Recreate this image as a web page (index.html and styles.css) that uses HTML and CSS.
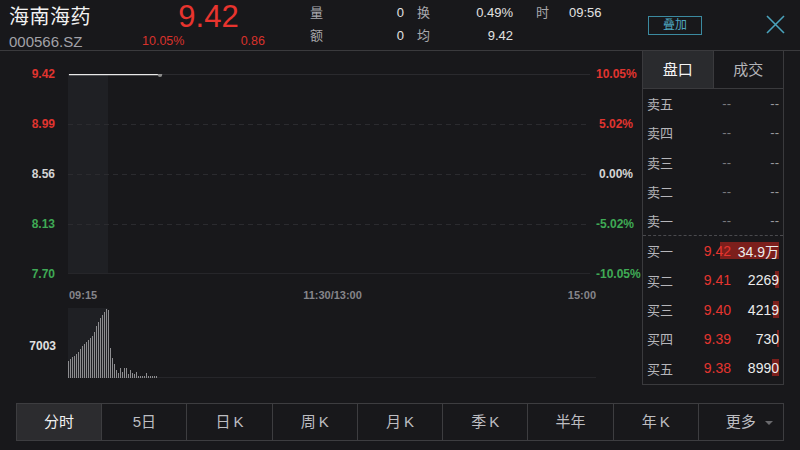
FILE: index.html
```html
<!DOCTYPE html>
<html lang="zh">
<head>
<meta charset="utf-8">
<link rel="stylesheet" href="styles.css">
</head>
<body>
<div class="page">
  <header class="header">
    <div class="name-block">
      <div class="name">海南海药</div>
      <div class="code">000566.SZ</div>
    </div>
    <div class="price-block">
      <div class="price">9.42</div>
      <div class="change"><span>10.05%</span><span>0.86</span></div>
    </div>
    <div class="stats">
      <span class="lbl">量</span><span class="val">0</span>
      <span class="lbl">换</span><span class="val">0.49%</span>
      <span class="lbl lbl-time">时</span><span class="val left">09:56</span>
      <span class="lbl">额</span><span class="val">0</span>
      <span class="lbl">均</span><span class="val">9.42</span>
      <span></span><span></span>
    </div>
    <div class="overlay-btn">叠加</div>
    <div class="close">
      <svg width="19" height="19" viewBox="0 0 19 19"><path d="M1 1L18 18M18 1L1 18" stroke="#4aa2bb" stroke-width="1.6" fill="none"/></svg>
    </div>
  </header>

  <main class="main">
    <section class="chart">
      <div class="price-chart">
        <div class="axis axis-left">
          <span class="up">9.42</span>
          <span class="up">8.99</span>
          <span class="flat">8.56</span>
          <span class="down">8.13</span>
          <span class="down">7.70</span>
        </div>
        <svg class="plot" width="528" height="200" viewBox="0 0 528 200">
          <rect x="0" y="0" width="40" height="200" fill="#1f2024"/>
          <line x1="0" y1="0.5" x2="522" y2="0.5" stroke="#2a2a2e"/>
          <line x1="0" y1="50.5" x2="522" y2="50.5" stroke="#2b2b2f" stroke-dasharray="5 4"/>
          <line x1="0" y1="100.5" x2="522" y2="100.5" stroke="#2b2b2f" stroke-dasharray="5 4"/>
          <line x1="0" y1="150.5" x2="522" y2="150.5" stroke="#2b2b2f" stroke-dasharray="5 4"/>
          <line x1="0" y1="199.5" x2="522" y2="199.5" stroke="#26262a"/>
          <line x1="1" y1="0.5" x2="92" y2="0.5" stroke="#e8e8e8" stroke-width="1.5"/>
          <circle cx="92" cy="0.8" r="2.2" fill="#8c8c8c"/>
        </svg>
        <div class="axis axis-right">
          <span class="up">10.05%</span>
          <span class="up">5.02%</span>
          <span class="flat">0.00%</span>
          <span class="down">-5.02%</span>
          <span class="down">-10.05%</span>
        </div>
      </div>
      <div class="time-row">
        <span>09:15</span><span>11:30/13:00</span><span>15:00</span>
      </div>
      <div class="volume-chart">
        <div class="vol-label">7003</div>
        <svg class="plot" width="528" height="70" viewBox="0 0 528 70">
          <rect x="0" y="0" width="40" height="70" fill="#1f2024"/>
          <line x1="0" y1="69.5" x2="528" y2="69.5" stroke="#26262a"/>
          <g fill="#8d8d90">
            <rect x="0" y="53" width="1" height="17"/>
            <rect x="2" y="51" width="1" height="19"/>
            <rect x="4" y="49" width="1" height="21"/>
            <rect x="6" y="48" width="1" height="22"/>
            <rect x="8" y="46" width="1" height="24"/>
            <rect x="10" y="44" width="1" height="26"/>
            <rect x="12" y="41" width="1" height="29"/>
            <rect x="14" y="38" width="1" height="32"/>
            <rect x="16" y="36" width="1" height="34"/>
            <rect x="18" y="34" width="1" height="36"/>
            <rect x="20" y="32" width="1" height="38"/>
            <rect x="22" y="30" width="1" height="40"/>
            <rect x="24" y="28" width="1" height="42"/>
            <rect x="26" y="24" width="1" height="46"/>
            <rect x="28" y="18" width="1" height="52"/>
            <rect x="30" y="14" width="1" height="56"/>
            <rect x="32" y="10" width="1" height="60"/>
            <rect x="34" y="7" width="1" height="63"/>
            <rect x="36" y="4" width="1" height="66"/>
            <rect x="38" y="1" width="1" height="69"/>
            <rect x="40" y="2" width="1" height="68"/>
            <rect x="42" y="40" width="1" height="30"/>
            <rect x="44" y="50" width="1" height="20"/>
            <rect x="46" y="56" width="1" height="14"/>
            <rect x="48" y="62" width="1" height="8"/>
            <rect x="50" y="65" width="1" height="5"/>
            <rect x="52" y="60" width="1" height="10"/>
            <rect x="54" y="64" width="1" height="6"/>
            <rect x="56" y="60" width="1" height="10"/>
            <rect x="58" y="60" width="1" height="10"/>
            <rect x="60" y="66" width="1" height="4"/>
            <rect x="62" y="62" width="1" height="8"/>
            <rect x="64" y="65" width="1" height="5"/>
            <rect x="66" y="66" width="1" height="4"/>
            <rect x="68" y="64" width="1" height="6"/>
            <rect x="70" y="68" width="1" height="2"/>
            <rect x="72" y="68" width="1" height="2"/>
            <rect x="74" y="68" width="1" height="2"/>
            <rect x="76" y="68" width="1" height="2"/>
            <rect x="78" y="65" width="1" height="5"/>
            <rect x="80" y="68" width="1" height="2"/>
            <rect x="82" y="68" width="1" height="2"/>
            <rect x="84" y="68" width="1" height="2"/>
            <rect x="86" y="68" width="1" height="2"/>
            <rect x="88" y="68" width="1" height="2"/>
          </g>
        </svg>
      </div>
    </section>

    <aside class="book">
      <div class="tabs">
        <div class="tab active">盘口</div>
        <div class="tab">成交</div>
      </div>
      <div class="side sell">
        <div class="row"><span class="rl">卖五</span><span class="rp dim">--</span><span class="rv dim2">--</span></div>
        <div class="row"><span class="rl">卖四</span><span class="rp dim">--</span><span class="rv dim2">--</span></div>
        <div class="row"><span class="rl">卖三</span><span class="rp dim">--</span><span class="rv dim2">--</span></div>
        <div class="row"><span class="rl">卖二</span><span class="rp dim">--</span><span class="rv dim2">--</span></div>
        <div class="row"><span class="rl">卖一</span><span class="rp dim">--</span><span class="rv dim2">--</span></div>
      </div>
      <div class="side buy">
        <div class="row"><i class="bar" style="width:59px"></i><span class="rl">买一</span><span class="rp red">9.42</span><span class="rv">34.9万</span></div>
        <div class="row"><i class="bar" style="width:4px"></i><span class="rl">买二</span><span class="rp red">9.41</span><span class="rv">2269</span></div>
        <div class="row"><i class="bar" style="width:6px"></i><span class="rl">买三</span><span class="rp red">9.40</span><span class="rv">4219</span></div>
        <div class="row"><i class="bar" style="width:2px"></i><span class="rl">买四</span><span class="rp red">9.39</span><span class="rv">730</span></div>
        <div class="row"><i class="bar" style="width:7px"></i><span class="rl">买五</span><span class="rp red">9.38</span><span class="rv">8990</span></div>
      </div>
    </aside>
  </main>

  <nav class="periods">
    <div class="period active">分时</div>
    <div class="period">5日</div>
    <div class="period spaced">日K</div>
    <div class="period spaced">周K</div>
    <div class="period spaced">月K</div>
    <div class="period spaced">季K</div>
    <div class="period">半年</div>
    <div class="period spaced">年K</div>
    <div class="period more">更多<span class="caret"></span></div>
  </nav>
</div>
</body>
</html>
```

FILE: styles.css
```css
* { box-sizing: border-box; margin: 0; padding: 0; }
html, body { width: 800px; height: 450px; overflow: hidden; }
body {
  background: #18181b;
  color: #e6e6e6;
  font-family: "Liberation Sans", "Noto Sans CJK SC", sans-serif;
}
.page { width: 800px; height: 450px; display: flex; flex-direction: column; }

/* header */
.header {
  height: 51px;
  border-bottom: 1px solid #3a3a3d;
  display: flex;
  align-items: flex-start;
  flex-shrink: 0;
}
.name-block { width: 140px; padding-left: 9px; }
.name { font-size: 20px; line-height: 24px; margin-top: 5px; color: #f2f2f2; letter-spacing: 0.5px; }
.code { font-size: 15px; line-height: 18px; margin-top: 4px; color: #a2a2a8; }
.price-block { width: 125px; padding-left: 2px; }
.price {
  font-size: 31px; line-height: 32px; color: #e8342e;
  text-align: center; padding-left: 10px; margin-top: 1px;
}
.change {
  display: flex; justify-content: space-between;
  font-size: 12.5px; line-height: 14px; color: #d9322c; margin-top: 1px;
}
.stats {
  margin-left: 45px;
  display: grid;
  grid-template-columns: 20px 61px 20px 63px 20px 50px;
  column-gap: 13px;
  grid-auto-rows: 23px;
  margin-top: 1px;
  font-size: 13px;
  line-height: 23px;
}
.stats .lbl { color: #a8a8ad; }
.stats .lbl-time { margin-left: 10px; }
.stats .val { text-align: right; color: #e2e2e2; }
.stats .val.left { text-align: left; padding-left: 10px; }

.overlay-btn {
  margin-left: 39px;
  margin-top: 16px;
  width: 54px; height: 19px;
  border: 1px solid #3b8aa0;
  color: #4fa7c0;
  font-size: 12px; line-height: 17px;
  text-align: center;
}
.close { margin-left: 64px; margin-top: 15px; width: 19px; height: 19px; }
.close svg { display: block; }

/* main */
.main { height: 352px; display: flex; flex-shrink: 0; }
.chart { width: 642px; }
.price-chart {
  display: grid;
  grid-template-columns: 68px 528px 46px;
  margin-top: 16px;
}
.axis {
  height: 214px;
  display: flex; flex-direction: column; justify-content: space-between;
  font-size: 12px; font-weight: bold; line-height: 14px;
}
.axis-left { text-align: right; padding-right: 13px; }
.axis-right { text-align: right; padding-right: 9px; white-space: nowrap; }
.up { color: #e0342f; }
.flat { color: #d4d4d4; }
.down { color: #3faa55; }
.price-chart .plot { margin-top: 7px; display: block; }

.time-row {
  margin-left: 69px; width: 527px;
  display: flex; justify-content: space-between;
  font-size: 11px; font-weight: bold; color: #85858a;
  line-height: 12px; margin-top: 8px;
}

.volume-chart {
  display: grid;
  grid-template-columns: 68px 528px;
  margin-top: 7px;
}
.vol-label {
  text-align: right; padding-right: 12px; padding-top: 31px;
  font-size: 12px; font-weight: bold; color: #e0e0e0; line-height: 14px;
}
.volume-chart .plot { display: block; }

/* order book */
.book {
  width: 142px; height: 335px;
  margin-top: -1px;
  border: 1px solid #3a3a3d;
  display: flex; flex-direction: column;
}
.tabs { display: flex; height: 38px; border-bottom: 1px solid #3a3a3d; }
.tab {
  flex: 1; text-align: center;
  font-size: 15px; line-height: 37px; color: #b4b4b8;
}
.tab.active { background: #2a2b2e; color: #f4f4f4; border-right: 1px solid #3a3a3d; }
.side { display: flex; flex-direction: column; }
.sell { border-bottom: 1px dashed #4a4a4e; height: 147px; }
.buy { height: 147px; }
.row {
  flex: 1;
  position: relative;
  display: grid;
  grid-template-columns: 44px 40px 48px;
  align-items: center;
  padding: 0 4px;
  font-size: 13px;
}
.rl { color: #b6b6ba; }
.rp { text-align: right; font-size: 14px; position: relative; }
.rv { text-align: right; font-size: 14px; color: #ececec; position: relative; }
.bar {
  position: absolute; right: 4px; top: 50%;
  height: 17px; margin-top: -9px;
  background: #7c1f1c;
}
.dim { color: #7a7a7e; font-size: 13px; }
.dim2 { color: #9a9a9e; font-size: 13px; }
.red { color: #e5352f; }

/* bottom tabs */
.periods {
  margin: 0 16px;
  height: 38px;
  display: flex;
  border: 1px solid #3d3d40;
}
.period {
  flex: 1;
  text-align: center;
  font-size: 15px; line-height: 36px;
  color: #bdbdc1;
  border-left: 1px solid #3d3d40;
}
.period.spaced { letter-spacing: 3px; text-indent: 3px; }
.period:first-child { border-left: none; }
.period.active { background: #2c2c2f; color: #f2f2f2; }
.more { position: relative; }
.caret {
  position: absolute; right: 10px; top: 17px;
  width: 0; height: 0;
  border-left: 4px solid transparent; border-right: 4px solid transparent;
  border-top: 4px solid #6a6a6e;
}
```
